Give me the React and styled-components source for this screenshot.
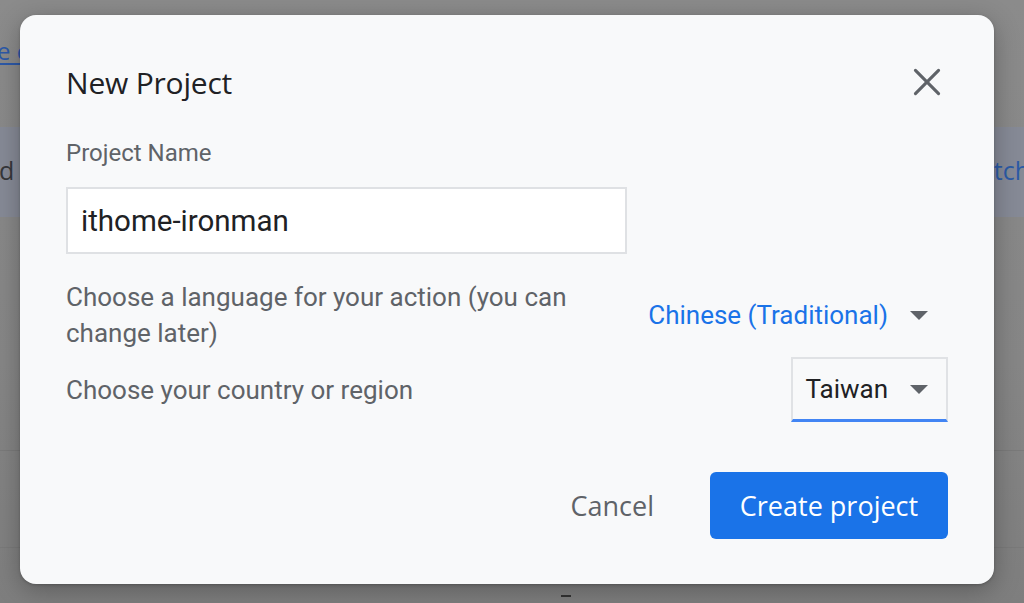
import React from "react";
import styled, { createGlobalStyle } from "styled-components";

const Global = createGlobalStyle`
  html, body { margin: 0; padding: 0; }
  body {
    width: 1024px;
    height: 603px;
    overflow: hidden;
    font-family: Roboto, "Liberation Sans", sans-serif;
  }
`;

const Page = styled.div`
  position: relative;
  width: 1024px;
  height: 603px;
  overflow: hidden;
  background: linear-gradient(180deg, #8b8b8b 0%, #868686 60%, #7e7e7e 100%);
  display: flex;
  flex-direction: column;
`;

const BgLinkRow = styled.div`
  height: 127px;
  display: flex;
  align-items: flex-start;
  padding-top: 34px;
  box-sizing: border-box;
`;

const BgLink = styled.span`
  margin-left: -3px;
  font-family: "Open Sans", sans-serif;
  font-size: 24px;
  color: #2d59a8;
  text-decoration: underline;
  text-underline-offset: 3px;
`;

const BgBand = styled.div`
  height: 90px;
  background: #868a96;
  display: flex;
  align-items: center;
  justify-content: space-between;
  font-family: "Open Sans", sans-serif;
  font-size: 25px;
`;

const BgLeftText = styled.span`
  margin-left: -1px;
  color: #36373a;
  padding-bottom: 4px;
`;

const BgRightText = styled.span`
  margin-right: -6px;
  color: #2b5aa6;
  font-weight: 500;
  padding-bottom: 4px;
`;

const BgRule = styled.div`
  height: 1px;
  background: #7a7a7a;
  margin-top: ${(p) => p.$top}px;
`;

const BgDash = styled.div`
  width: 10px;
  height: 2px;
  background: #333;
  margin: 47px 0 0 561px;
`;

const Dialog = styled.div`
  position: absolute;
  left: 20px;
  top: 15px;
  width: 974px;
  height: 569px;
  box-sizing: border-box;
  padding: 45px 46px 45px 46px;
  background: #f8f9fa;
  border-radius: 16px;
  box-shadow: 0 6px 26px rgba(0, 0, 0, 0.28), 0 1px 3px rgba(0, 0, 0, 0.2);
  display: flex;
  flex-direction: column;
`;

const Header = styled.div`
  height: 44px;
  display: flex;
  align-items: center;
  justify-content: space-between;
`;

const Title = styled.h2`
  margin: 0;
  font-family: "Open Sans", sans-serif;
  font-weight: 500;
  font-size: 30px;
  color: #202124;
  letter-spacing: -0.2px;
`;

const CloseButton = styled.button`
  width: 44px;
  height: 44px;
  padding: 0;
  border: none;
  background: transparent;
  display: flex;
  align-items: center;
  justify-content: center;
  margin-right: -1px;
  cursor: pointer;
`;

const FieldLabel = styled.div`
  margin-top: 34px;
  height: 30px;
  line-height: 30px;
  font-size: 24px;
  color: #5f6368;
`;

const NameInput = styled.div`
  margin-top: 19px;
  width: 561px;
  height: 67px;
  box-sizing: border-box;
  background: #fff;
  border: 2px solid #dfe1e4;
  display: flex;
  align-items: center;
  padding-left: 13px;
  font-size: 29.5px;
  color: #202124;
`;

const OptionRow = styled.div`
  display: flex;
  align-items: center;
  justify-content: space-between;
  margin-top: ${(p) => p.$gap}px;
`;

const OptionLabel = styled.div`
  max-width: 540px;
  font-size: 26px;
  line-height: 36px;
  color: #5f6368;
`;

const Select = styled.div`
  display: flex;
  align-items: center;
  box-sizing: border-box;
  height: ${(p) => (p.$boxed ? "65px" : "auto")};
  padding: ${(p) => (p.$boxed ? "0 18px 0 12px" : "0 20px 0 14px")};
  font-size: 26px;
  color: ${(p) => (p.$boxed ? "#202124" : "#1a73e8")};
  border: ${(p) => (p.$boxed ? "2px solid #e0e2e5" : "none")};
  border-bottom: ${(p) => (p.$boxed ? "3px solid #4285f4" : "none")};
  background: ${(p) => (p.$boxed ? "#f8f9fa" : "transparent")};
`;

const Arrow = styled.span`
  margin-left: 22px;
  width: 0;
  height: 0;
  border-left: 9px solid transparent;
  border-right: 9px solid transparent;
  border-top: 9px solid #5f6368;
`;

const Footer = styled.div`
  margin-top: auto;
  display: flex;
  justify-content: flex-end;
  align-items: center;
  gap: 56px;
`;

const TextButton = styled.button`
  border: none;
  background: transparent;
  padding: 0;
  font-family: "Open Sans", sans-serif;
  font-size: 27px;
  font-weight: 500;
  color: #5f6368;
`;

const PrimaryButton = styled.button`
  width: 238px;
  height: 67px;
  border: none;
  border-radius: 6px;
  background: #1a73e8;
  color: #fff;
  font-family: "Open Sans", sans-serif;
  font-size: 27px;
  font-weight: 500;
`;

function CloseIcon() {
  return (
    <svg width="44" height="44" viewBox="0 0 24 24">
      <path
        d="M5.7 5.7 L18.3 18.3 M18.3 5.7 L5.7 18.3"
        stroke="#5f6368"
        strokeWidth="1.7"
        strokeLinecap="round"
        fill="none"
      />
    </svg>
  );
}

export default function App() {
  return (
    <>
      <Global />
      <Page>
        <BgLinkRow>
          <BgLink>e c</BgLink>
        </BgLinkRow>
        <BgBand>
          <BgLeftText>d</BgLeftText>
          <BgRightText>tch</BgRightText>
        </BgBand>
        <BgRule $top={233} />
        <BgRule $top={96} />
        <BgDash />
        <Dialog>
          <Header>
            <Title>New Project</Title>
            <CloseButton aria-label="Close">
              <CloseIcon />
            </CloseButton>
          </Header>
          <FieldLabel>Project Name</FieldLabel>
          <NameInput>ithome-ironman</NameInput>
          <OptionRow $gap={25}>
            <OptionLabel>
              Choose a language for your action (you can change later)
            </OptionLabel>
            <Select>
              Chinese (Traditional)
              <Arrow />
            </Select>
          </OptionRow>
          <OptionRow $gap={6}>
            <OptionLabel>Choose your country or region</OptionLabel>
            <Select $boxed>
              Taiwan
              <Arrow />
            </Select>
          </OptionRow>
          <Footer>
            <TextButton>Cancel</TextButton>
            <PrimaryButton>Create project</PrimaryButton>
          </Footer>
        </Dialog>
      </Page>
    </>
  );
}
